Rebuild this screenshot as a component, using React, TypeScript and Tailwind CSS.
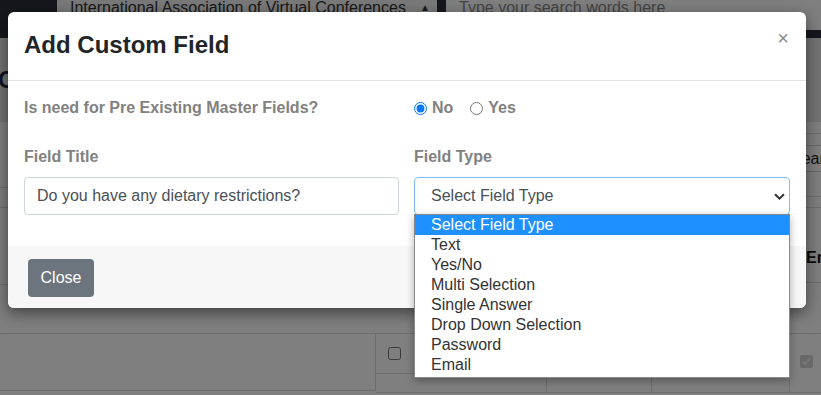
import React from "react";

const options = [
  "Select Field Type",
  "Text",
  "Yes/No",
  "Multi Selection",
  "Single Answer",
  "Drop Down Selection",
  "Password",
  "Email",
];

export default function App() {
  return (
    <div className="relative w-[821px] h-[395px] overflow-hidden bg-white font-['Liberation_Sans',Arial,sans-serif]">
      {/* background page */}
      <div className="flex flex-col h-full">
        <header className="h-[38px] shrink-0 bg-[#2a2f3a] flex">
          <div className="w-[57px]" />
          <div className="w-[380px] h-[30px] bg-[#f2f2f2] pl-[13px] text-[16px] leading-[16px] text-[#333] flex items-start gap-[14px] whitespace-nowrap">
            <span>International Association of Virtual Conferences</span>
            <span className="text-[10px] leading-[16px]">▲</span>
          </div>
          <div className="w-[9px]" />
          <div className="flex-1 h-[30px] bg-white pl-[13px] text-[16px] leading-[16px] text-[#888] whitespace-nowrap">
            Type your search words here
          </div>
        </header>

        <div className="flex h-[295px] shrink-0">
          <div className="flex-1 flex flex-col">
            <div className="h-[84px] bg-[#e6e6e6] flex items-center overflow-hidden">
              <span className="ml-[-2px] text-[24px] font-bold text-[#1d2a4a] whitespace-nowrap">Custom Fields</span>
            </div>
            <div className="h-[66px] border-b border-[#dcdcdc]" />
            <div className="h-[20px] border-b border-[#dcdcdc]" />
            <div className="h-[77px] border-b border-[#dcdcdc]" />
          </div>
          <div className="w-[15px] flex flex-col">
            <div className="h-[84px] bg-[#e6e6e6]" />
            <div className="h-[12px] border-b border-[#dcdcdc]" />
            <div className="mt-[11px] h-[27px] w-[52px] ml-[-32px] border border-[#cfcfcf] pl-[16px] text-[16px] leading-[25px] text-[#222] whitespace-nowrap overflow-hidden">
              Search
            </div>
            <div className="h-[25px] border-b border-[#dcdcdc]" />
            <div className="h-[11px] border-b border-[#dcdcdc]" />
            <div className="h-[75px] border-b border-[#dcdcdc] pt-[40px] text-[16px] leading-[20px] font-bold text-[#111] whitespace-nowrap">
              Email
            </div>
          </div>
        </div>

        <div className="flex border-t border-[#dcdcdc]">
          <div className="w-[376px] h-[57px] border-b border-r border-[#dcdcdc]" />
          <div className="w-[171px] border-r border-[#dcdcdc] flex flex-col">
            <div className="h-[40px] border-b border-[#dcdcdc] flex items-center pl-[12px]">
              <input type="checkbox" readOnly className="m-0 w-[13px] h-[13px]" />
            </div>
            <div className="h-[19px] border-b border-[#dcdcdc]" />
          </div>
          <div className="w-[105px] h-[59px] border-b border-r border-[#dcdcdc]" />
          <div className="w-[138px] h-[59px] border-b border-r border-[#dcdcdc]" />
          <div className="flex-1 h-[59px] border-b border-[#dcdcdc] pl-[10px] pt-[17px]">
            <input type="checkbox" defaultChecked disabled className="m-0 w-[13px] h-[13px]" />
          </div>
        </div>
      </div>

      {/* backdrop */}
      <div className="absolute inset-0 bg-black/50" />

      {/* modal */}
      <div className="absolute left-[8px] top-[12px] w-[798px] h-[296px] bg-white rounded-[6px] shadow-[0_5px_15px_rgba(0,0,0,0.5)] flex flex-col overflow-hidden">
        <div className="h-[69px] shrink-0 border-b border-[#e5e5e5] flex items-start justify-between pl-[16px] pr-[17px] pt-[19px]">
          <h4 className="text-[24px] leading-[28px] font-bold text-[#212529]">Add Custom Field</h4>
          <span className="mt-[-3px] text-[20px] leading-[21px] text-[#8c8c8c]">×</span>
        </div>

        <div className="px-[16px] pt-[15px] pb-[31px] shrink-0">
          <div className="grid grid-cols-[375px_376px] gap-x-[15px]">
            <div className="h-[24px] leading-[24px] text-[16px] font-bold text-[#818181]">
              Is need for Pre Existing Master Fields?
            </div>
            <div className="h-[24px] flex items-center text-[16px] font-bold text-[#818181]">
              <input type="radio" name="m" defaultChecked className="m-0 w-[13px] h-[13px]" />
              <span className="ml-[5px]">No</span>
              <input type="radio" name="m" className="ml-[17px] m-0 w-[13px] h-[13px]" />
              <span className="ml-[5px]">Yes</span>
            </div>

            <div className="mt-[25px] h-[24px] leading-[24px] text-[16px] font-bold text-[#818181]">Field Title</div>
            <div className="mt-[25px] h-[24px] leading-[24px] text-[16px] font-bold text-[#818181]">Field Type</div>

            <div className="mt-[8px] h-[38px] border border-[#ced4da] rounded-[4px] pl-[12px] flex items-center text-[16px] text-[#495057]">
              Do you have any dietary restrictions?
            </div>
            <div className="mt-[8px] h-[38px] border border-[#80bdff] rounded-[4px] pl-[16px] pr-[4px] flex items-center justify-between text-[16px] text-[#495057]">
              <span>Select Field Type</span>
              <svg width="11" height="7" viewBox="0 0 11 7" className="mt-[1px]">
                <path d="M1 1.2 L5.5 5.6 L10 1.2" fill="none" stroke="#333" strokeWidth="2" />
              </svg>
            </div>
          </div>
        </div>

        <div className="flex-1 bg-[#f7f7f7] flex items-start pt-[13px] pl-[20px]">
          <button className="h-[38px] w-[66px] rounded-[4px] bg-[#6c757d] text-white text-[16px]">Close</button>
        </div>
      </div>

      {/* open dropdown list */}
      <div className="absolute left-[414px] top-[214px] w-[376px] bg-white border border-[#8a8a8a] pb-[2px] shadow-[0_3px_8px_rgba(0,0,0,0.3)]">
        {options.map((o, i) => (
          <div
            key={o}
            className={
              i === 0
                ? "h-[20px] leading-[20px] pl-[16px] text-[16px] bg-[#1e90ff] text-white"
                : "h-[20px] leading-[20px] pl-[16px] text-[16px] text-[#333]"
            }
          >
            {o}
          </div>
        ))}
      </div>
    </div>
  );
}
